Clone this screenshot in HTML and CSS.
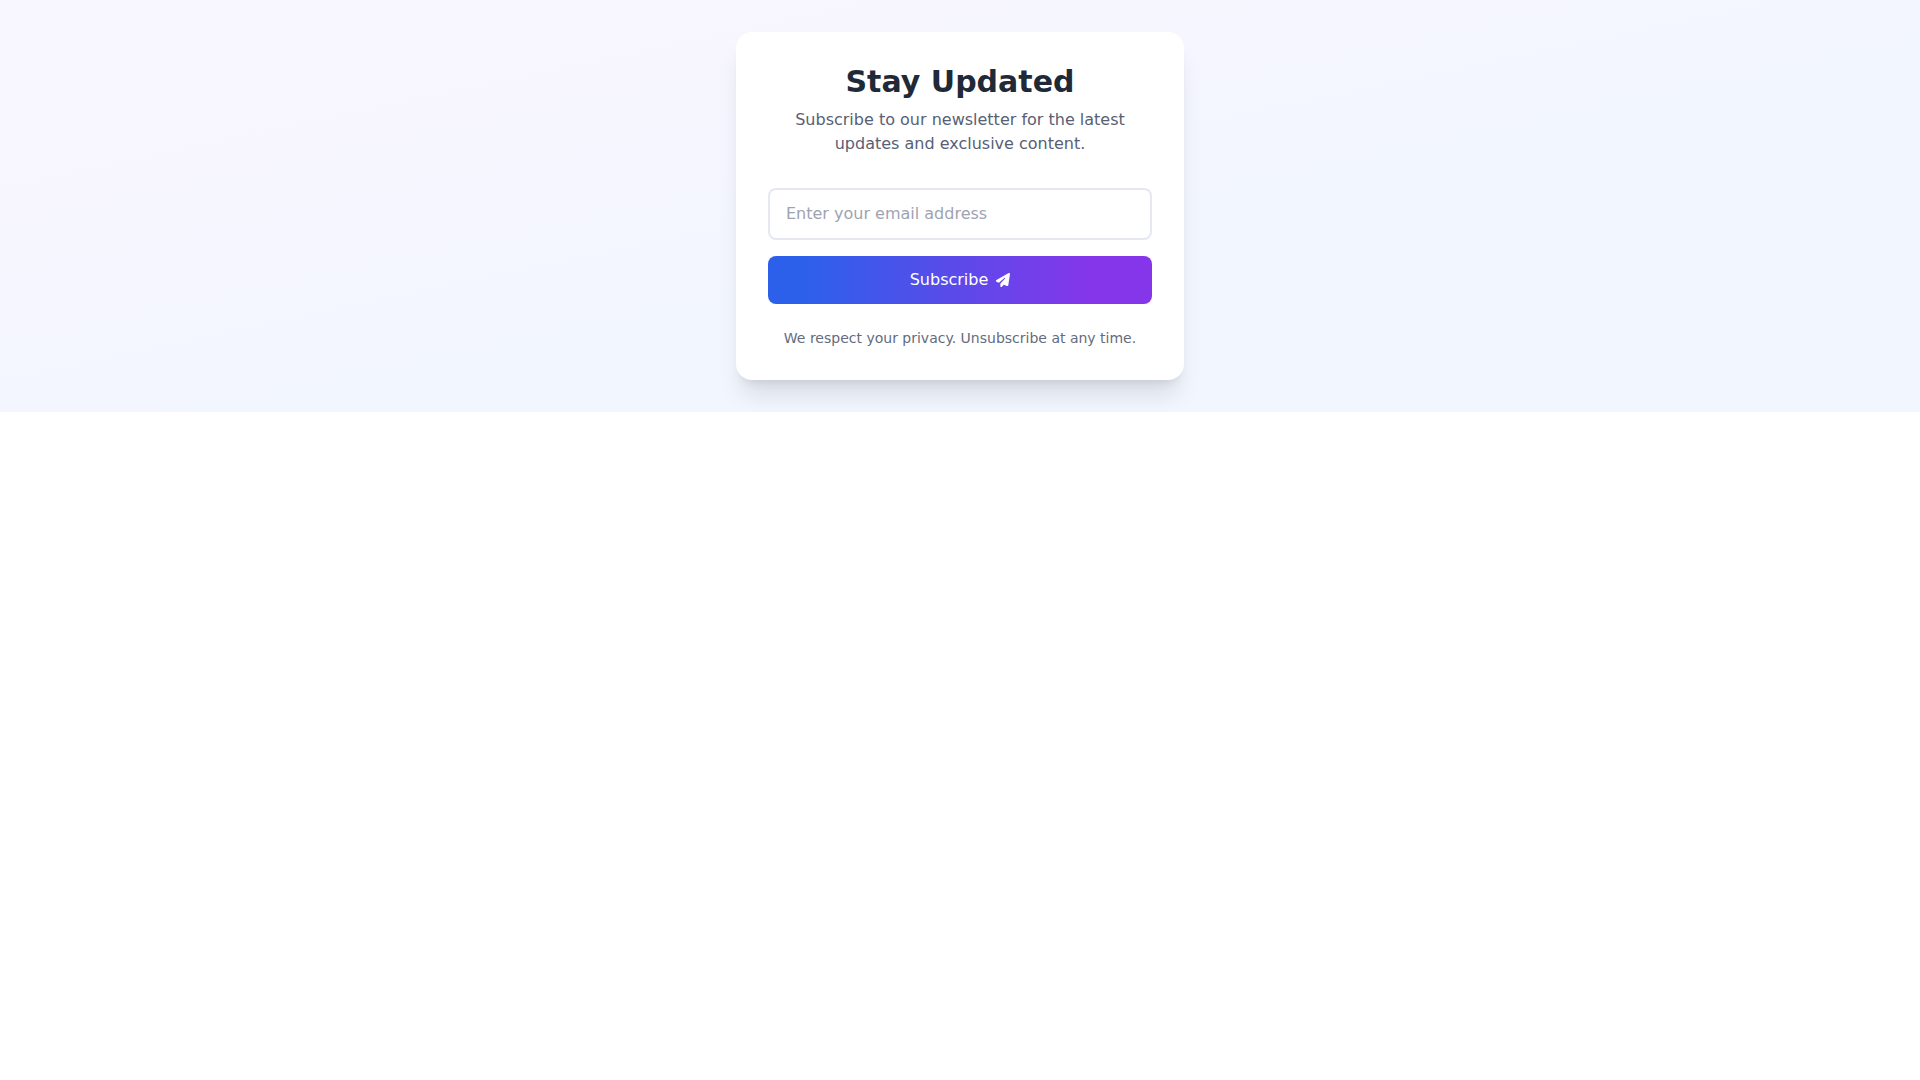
FILE: index.html
```html
<!DOCTYPE html>
<html lang="en">
<head>
  <meta charset="UTF-8">
  <meta name="viewport" content="width=device-width, initial-scale=1.0">
  <title>Stay Updated</title>
  <link rel="stylesheet" href="styles.css">
</head>
<body>
  <section class="newsletter">
    <div class="card">
      <div class="card-header">
        <h2>Stay Updated</h2>
        <p>Subscribe to our newsletter for the latest updates and exclusive content.</p>
      </div>

      <form class="subscribe-form">
        <input type="email" class="email-input" placeholder="Enter your email address" aria-label="Email address" required>
        <button type="submit" class="subscribe-button">
          <span>Subscribe</span>
          <svg fill="currentColor" viewBox="0 0 512 512" height="14" width="14" aria-hidden="true" xmlns="http://www.w3.org/2000/svg"><path d="M498.1 5.6c10.1 7 15.4 19.1 13.5 31.2l-64 416c-1.5 9.7-7.4 18.2-16 23s-18.9 5.4-28 1.6L284 427.7l-68.5 74.1c-8.9 9.7-22.9 12.9-35.2 8.1S160 493.2 160 480V396.4c0-4 1.5-7.8 4.2-10.7L331.8 202.8c5.8-6.3 5.6-16-.4-22s-15.7-6.4-22-.7L106 360.8 17.7 316.6C7.1 311.3 .3 300.7 0 288.9s5.9-22.8 16.1-28.7l448-256c10.7-6.1 23.9-5.5 34 1.4z"></path></svg>
        </button>
      </form>

      <p class="privacy-note">We respect your privacy. Unsubscribe at any time.</p>
    </div>
  </section>
</body>
</html>
```

FILE: styles.css
```css
* {
  margin: 0;
  padding: 0;
  box-sizing: border-box;
}

body {
  font-family: 'DejaVu Sans', sans-serif;
  font-size: 16px;
  line-height: 24px;
  background-color: #ffffff;
}

.newsletter {
  padding: 32px 16px;
  background: linear-gradient(to bottom right, #f8f6ff 20%, #f2f6ff 60%);
}

.card {
  max-width: 448px;
  margin: 0 auto;
  padding: 32px;
  background-color: #ffffff;
  border-radius: 16px;
  box-shadow: 0 20px 25px -5px rgba(0, 0, 0, 0.1), 0 8px 10px -6px rgba(0, 0, 0, 0.1);
}

.card-header {
  margin-bottom: 32px;
  text-align: center;
}

.card-header h2 {
  margin-bottom: 8px;
  font-size: 30px;
  line-height: 36px;
  font-weight: bold;
  color: #1f2937;
}

.card-header p {
  color: #576074;
}

.subscribe-form {
  display: flex;
  flex-direction: column;
  gap: 16px;
}

.email-input {
  width: 100%;
  padding: 12px 16px;
  border: 2px solid #e5e8f2;
  border-radius: 8px;
  font: inherit;
  color: #1f2937;
}

.email-input::placeholder {
  color: #9ea3b2;
}

.email-input:focus {
  outline: none;
  border-color: #2563eb;
}

.subscribe-button {
  display: flex;
  align-items: center;
  justify-content: center;
  gap: 8px;
  padding: 12px 24px;
  border: none;
  border-radius: 8px;
  background: linear-gradient(to right, #2d60ea 10%, #8636ea 85%);
  font: inherit;
  color: #ffffff;
  cursor: pointer;
}

.subscribe-button:hover {
  background: linear-gradient(to right, #1d4ed8, #7e22ce);
}

.privacy-note {
  margin-top: 24px;
  font-size: 14px;
  line-height: 20px;
  text-align: center;
  color: #646b7e;
}
```
